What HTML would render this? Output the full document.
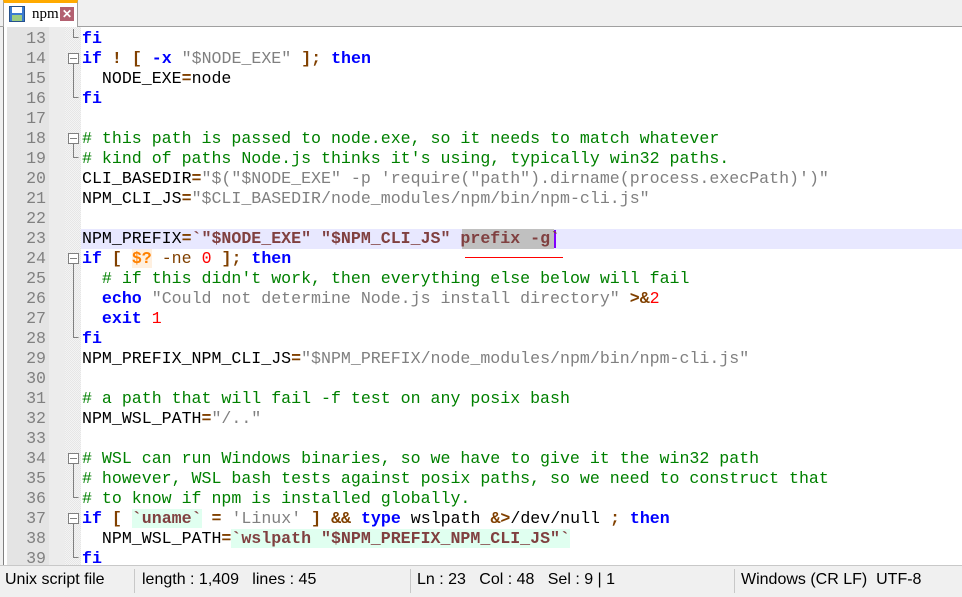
<!DOCTYPE html>
<html><head><meta charset="utf-8"><style>
*{margin:0;padding:0;box-sizing:border-box}
body{width:962px;height:597px;background:#f0f0f0;position:relative;overflow:hidden;font-family:"Liberation Sans",sans-serif}
#tabbar{position:absolute;left:0;top:0;width:962px;height:27px;background:#f0f0f0;border-bottom:1px solid #a0a0a0}
#tab{position:absolute;left:3px;top:0;width:75px;height:27px;background:#fff;border:1px solid #a0a0a0;border-bottom:none;border-top:3px solid #fa0}
#editor{position:absolute;left:3px;top:27px;width:959px;height:538px;background:#fff;border-left:1px solid #808080;overflow:hidden}
#lnbg{position:absolute;left:3px;top:0;width:42px;height:538px;background:#e4e4e4}
#lnbg2{position:absolute;left:45px;top:0;width:19px;height:538px;background:#ececec}
#fold{position:absolute;left:61px;top:0;width:16px;height:538px;background:repeating-conic-gradient(#f4f4f4 0 25%,#e6e6e6 0 50%) 0 0/2px 2px}
.ln{position:absolute;left:4px;width:38px;text-align:right;color:#808080;font:16.6px/20px "Liberation Mono",monospace}
.l{position:absolute;left:78px;white-space:pre;font:16.6px/20px "Liberation Mono",monospace;color:#000}
.k{color:#0000ff;font-weight:bold}
.o{color:#804000;font-weight:bold}
.s{color:#808080}
.c{color:#008000}
.v{color:#804040;font-weight:bold}
.n{color:#ff0000}
.q{color:#804040;font-weight:bold;background:#e0fff0}
.st{position:absolute;top:565px;height:32px;font-size:16px;line-height:30px;color:#000}
</style></head><body>
<div id="tabbar"><div id="tab">
<svg style="position:absolute;left:5px;top:3px" width="16" height="16"><rect x="0.5" y="0.5" width="15" height="15" fill="#3b7bd0" stroke="#25508a"/><rect x="3" y="1" width="10" height="6" fill="#fff"/><rect x="3" y="9" width="10" height="6" fill="#9ccc80"/></svg>
<span style="position:absolute;left:28px;top:3px;font:15px 'Liberation Serif',serif">npm</span>
<div style="position:absolute;left:56px;top:4px;width:14px;height:14px;background:#b36070;color:#fff;font:bold 12px/14px sans-serif;text-align:center">✕</div>
</div></div>
<div id="editor">
<div id="lnbg"></div><div id="lnbg2"></div><div id="fold"></div>
<div style="position:absolute;left:77px;top:202px;width:882px;height:20px;background:#e8e8ff"></div>
<div style="position:absolute;left:458px;top:202px;width:92px;height:20px;background:#c0c0c0"></div>
<div style="position:absolute;left:550px;top:203px;width:2px;height:18px;background:#8000ff"></div>
<div style="position:absolute;left:461px;top:230px;width:98px;height:1px;background:#ff0000"></div>
<svg style="position:absolute;left:61px;top:0" width="16" height="538" fill="none" stroke="#808080">
<path d="M8.5 2v8.5h5"/>
<rect x="3.5" y="26.5" width="10" height="10" fill="#fff"/><path d="M5 31.5h7M8.5 37v33.5h5"/>
<rect x="3.5" y="106.5" width="10" height="10" fill="#fff"/><path d="M5 111.5h7M8.5 117v13.5h5"/>
<rect x="3.5" y="226.5" width="10" height="10" fill="#fff"/><path d="M5 231.5h7M8.5 237v73.5h5"/>
<rect x="3.5" y="426.5" width="10" height="10" fill="#fff"/><path d="M5 431.5h7M8.5 437v33.5h5"/>
<rect x="3.5" y="486.5" width="10" height="10" fill="#fff"/><path d="M5 491.5h7M8.5 497v33.5h5"/>
</svg>
<div class="ln" style="top:2px">13</div><div class="ln" style="top:22px">14</div><div class="ln" style="top:42px">15</div><div class="ln" style="top:62px">16</div><div class="ln" style="top:82px">17</div><div class="ln" style="top:102px">18</div><div class="ln" style="top:122px">19</div><div class="ln" style="top:142px">20</div><div class="ln" style="top:162px">21</div><div class="ln" style="top:182px">22</div><div class="ln" style="top:202px">23</div><div class="ln" style="top:222px">24</div><div class="ln" style="top:242px">25</div><div class="ln" style="top:262px">26</div><div class="ln" style="top:282px">27</div><div class="ln" style="top:302px">28</div><div class="ln" style="top:322px">29</div><div class="ln" style="top:342px">30</div><div class="ln" style="top:362px">31</div><div class="ln" style="top:382px">32</div><div class="ln" style="top:402px">33</div><div class="ln" style="top:422px">34</div><div class="ln" style="top:442px">35</div><div class="ln" style="top:462px">36</div><div class="ln" style="top:482px">37</div><div class="ln" style="top:502px">38</div><div class="ln" style="top:522px">39</div>
<div class="l" style="top:2px"><span class="k">fi</span></div>
<div class="l" style="top:22px"><span class="k">if</span> <span class="o">!</span> <span class="o">[</span> <span class="k">-x</span> <span class="s">"</span><span class="s">$NODE_EXE"</span> <span class="o">];</span> <span class="k">then</span></div>
<div class="l" style="top:42px">  NODE_EXE<span class="o">=</span>node</div>
<div class="l" style="top:62px"><span class="k">fi</span></div>
<div class="l" style="top:102px"><span class="c"># this path is passed to node.exe, so it needs to match whatever</span></div>
<div class="l" style="top:122px"><span class="c"># kind of paths Node.js thinks it's using, typically win32 paths.</span></div>
<div class="l" style="top:142px">CLI_BASEDIR<span class="o">=</span><span class="s">"$("$NODE_EXE" -p 'require("path").dirname(process.execPath)')"</span></div>
<div class="l" style="top:162px">NPM_CLI_JS<span class="o">=</span><span class="s">"$CLI_BASEDIR/node_modules/npm/bin/npm-cli.js"</span></div>
<div class="l" style="top:202px">NPM_PREFIX<span class="o">=</span><span class="v">`"$NODE_EXE" "$NPM_CLI_JS" prefix -g`</span></div>
<div class="l" style="top:222px"><span class="k">if</span> <span class="o">[</span> <span class="v" style="color:#ff8000;background:#fff0e0">$?</span> <span class="o" style="font-weight:normal">-ne</span> <span class="n">0</span> <span class="o">];</span> <span class="k">then</span></div>
<div class="l" style="top:242px">  <span class="c"># if this didn't work, then everything else below will fail</span></div>
<div class="l" style="top:262px">  <span class="k">echo</span> <span class="s">"Could not determine Node.js install directory"</span> <span class="o">&gt;&amp;</span><span class="n">2</span></div>
<div class="l" style="top:282px">  <span class="k">exit</span> <span class="n">1</span></div>
<div class="l" style="top:302px"><span class="k">fi</span></div>
<div class="l" style="top:322px">NPM_PREFIX_NPM_CLI_JS<span class="o">=</span><span class="s">"$NPM_PREFIX/node_modules/npm/bin/npm-cli.js"</span></div>
<div class="l" style="top:362px"><span class="c"># a path that will fail -f test on any posix bash</span></div>
<div class="l" style="top:382px">NPM_WSL_PATH<span class="o">=</span><span class="s">"/.."</span></div>
<div class="l" style="top:422px"><span class="c"># WSL can run Windows binaries, so we have to give it the win32 path</span></div>
<div class="l" style="top:442px"><span class="c"># however, WSL bash tests against posix paths, so we need to construct that</span></div>
<div class="l" style="top:462px"><span class="c"># to know if npm is installed globally.</span></div>
<div class="l" style="top:482px"><span class="k">if</span> <span class="o">[</span> <span class="q">`uname`</span> <span class="o">=</span> <span class="s">'Linux'</span> <span class="o">]</span> <span class="o">&amp;&amp;</span> <span class="k">type</span> wslpath <span class="o">&amp;&gt;</span>/dev/null <span class="o">;</span> <span class="k">then</span></div>
<div class="l" style="top:502px">  NPM_WSL_PATH<span class="o">=</span><span class="q">`wslpath "$NPM_PREFIX_NPM_CLI_JS"`</span></div>
<div class="l" style="top:522px"><span class="k">fi</span></div>
</div>
<div style="position:absolute;left:0;top:565px;width:962px;height:32px;background:#f0f0f0;border-top:1px solid #c8c8c8"></div>
<div class="st" style="left:5px">Unix script file</div>
<div style="position:absolute;left:134px;top:569px;width:1px;height:24px;background:#c8c8c8"></div>
<div class="st" style="left:142px">length : 1,409&nbsp;&nbsp;&nbsp;lines : 45</div>
<div style="position:absolute;left:410px;top:569px;width:1px;height:24px;background:#c8c8c8"></div>
<div class="st" style="left:417px">Ln : 23&nbsp;&nbsp;&nbsp;Col : 48&nbsp;&nbsp;&nbsp;Sel : 9 | 1</div>
<div style="position:absolute;left:734px;top:569px;width:1px;height:24px;background:#c8c8c8"></div>
<div class="st" style="left:741px">Windows (CR LF)&nbsp;&nbsp;UTF-8</div>
</body></html>
